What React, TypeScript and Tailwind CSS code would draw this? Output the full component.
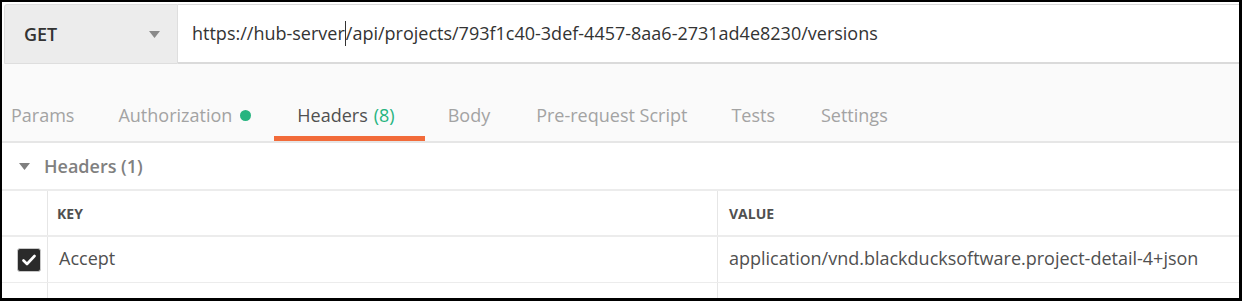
import React from "react";

function Tab({ label, active, dot, count, pad }: { label: string; active?: boolean; dot?: boolean; count?: string; pad: string }) {
  return (
    <div className={"relative flex h-full items-center " + pad}>
      <span className={active ? "text-[#505050]" : "text-[#a3a3a3]"}>{label}</span>
      {count && <span className="ml-[6px] text-[#26b47f]">{count}</span>}
      {dot && <span className="ml-[8px] inline-block h-[11px] w-[11px] rounded-full bg-[#26b47f]" />}
      {active && <div className="absolute bottom-0 left-0 right-0 h-[5px] bg-[#f26b3a]" />}
    </div>
  );
}

export default function App() {
  return (
    <div
      className="box-border h-[301px] w-[1242px] overflow-hidden border-b-[3px] border-l-2 border-r-[3px] border-t-2 border-black bg-white"
      style={{ fontFamily: '"Open Sans", "Liberation Sans", sans-serif' }}
    >
      {/* URL row */}
      <div className="flex h-[62px] bg-white pl-[2px] pt-[2px]">
        <div className="flex w-[174px] items-center justify-between rounded-tl-[3px] border border-[#dedede] bg-[#ececec] pl-[19px] pr-[17px]">
          <span className="text-[18px] font-semibold text-[#333]">GET</span>
          <svg width="11" height="7" viewBox="0 0 11 7">
            <path d="M0 0 L11 0 L5.5 7 Z" fill="#8a8a8a" />
          </svg>
        </div>
        <div className="flex flex-1 items-center border-b-[2px] border-t border-[#dadada] bg-white pl-[14px] text-[18px] text-[#333]">
          <span>https://hub-server</span>
          <span className="inline-block h-[25px] w-px bg-[#333]" />
          <span>/api/projects/793f1c40-3def-4457-8aa6-2731ad4e8230/versions</span>
        </div>
      </div>
      {/* Tabs */}
      <div className="flex h-[79px] items-end border-b-2 border-[#e6e6e6] bg-[#fafafa]">
        <div className="-ml-[14px] flex h-[51px] text-[18px]">
          <Tab label="Params" pad="pl-[23px] pr-[21px]" />
          <Tab label="Authorization" dot pad="px-[23px]" />
          <Tab label="Headers" count="(8)" active pad="pl-[23px] pr-[30px]" />
          <Tab label="Body" pad="px-[23px]" />
          <Tab label="Pre-request Script" pad="pl-[23px] pr-[21px]" />
          <Tab label="Tests" pad="px-[23px]" />
          <Tab label="Settings" pad="px-[23px]" />
        </div>
      </div>
      {/* Headers section */}
      <div className="flex h-[48px] items-center border-b-2 border-[#ececec] pl-[17px]">
        <svg width="11" height="7" viewBox="0 0 11 7">
          <path d="M0 0 L11 0 L5.5 7 Z" fill="#7f7f7f" />
        </svg>
        <span className="ml-[14px] text-[18px] font-semibold text-[#808080]">Headers (1)</span>
      </div>
      {/* Table */}
      <div className="flex h-[46px] border-b-2 border-[#ececec]">
        <div className="w-[46px] border-r border-[#e6e6e6]" />
        <div className="flex w-[670px] items-center border-r border-[#e6e6e6] pl-[9px] text-[14px] font-bold text-[#505050]">KEY</div>
        <div className="flex flex-1 items-center pl-[11px] text-[14px] font-bold text-[#505050]">VALUE</div>
      </div>
      <div className="flex h-[46px] border-b border-[#ececec]">
        <div className="flex w-[46px] items-center border-r border-[#e6e6e6] pl-[15px]">
          <div className="flex h-[24px] w-[24px] items-center justify-center rounded-[3px] border border-[#c8c8c8] bg-[#2b2b2b]">
            <svg width="14" height="12" viewBox="0 0 14 12">
              <path d="M1.5 6.5 L5 10 L12.5 2" fill="none" stroke="#fff" strokeWidth="2.6" strokeLinecap="round" strokeLinejoin="round" />
            </svg>
          </div>
        </div>
        <div className="flex w-[670px] items-center border-r border-[#e6e6e6] pb-[2px] pl-[11px] text-[18px] text-[#505050]">Accept</div>
        <div className="flex flex-1 items-center pb-[2px] pl-[11px] text-[18px] text-[#505050]">application/vnd.blackducksoftware.project-detail-4+json</div>
      </div>
      <div className="flex h-[46px]">
        <div className="w-[46px] border-r border-[#e6e6e6]" />
        <div className="flex w-[670px] items-center border-r border-[#e6e6e6] pl-[11px] text-[18px] text-[#c4c4c4]">Key</div>
        <div className="flex flex-1 items-center pl-[11px] text-[18px] text-[#c4c4c4]">Value</div>
      </div>
    </div>
  );
}
